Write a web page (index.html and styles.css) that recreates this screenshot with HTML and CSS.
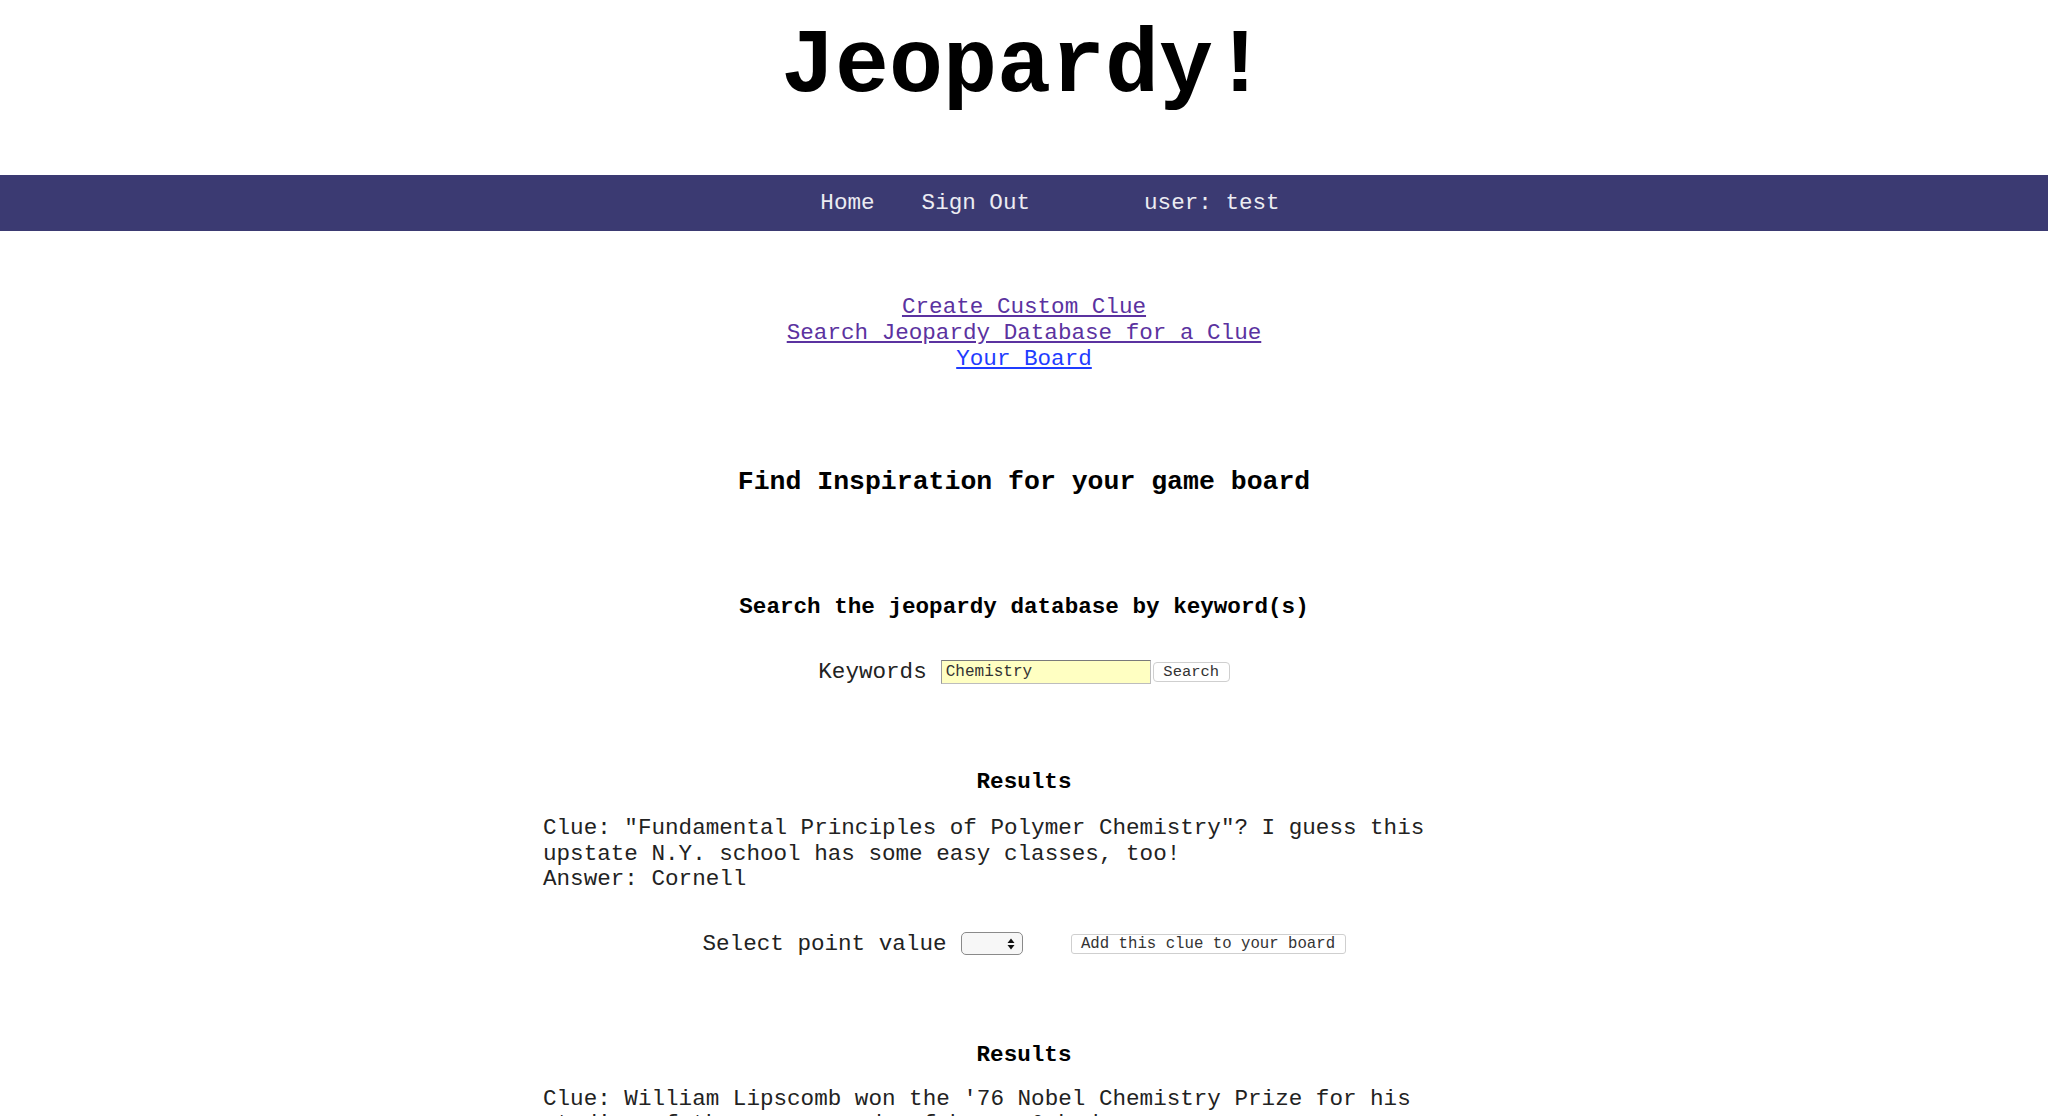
FILE: index.html
```html
<!DOCTYPE html>
<html lang="en">
<head>
<meta charset="utf-8">
<title>Jeopardy!</title>
<link rel="stylesheet" href="styles.css">
</head>
<body>
<header class="masthead">
  <h1 class="title">Jeopardy!</h1>
</header>
<nav class="navbar">
  <div class="nav-inner">
    <a class="nav-link" href="#">Home</a>
    <a class="nav-link nav-signout" href="#">Sign Out</a>
    <span class="nav-user">user: test</span>
  </div>
</nav>
<main class="content">
  <div class="links">
    <a class="visited" href="#">Create Custom Clue</a><br>
    <a class="visited" href="#">Search Jeopardy Database for a Clue</a><br>
    <a class="fresh" href="#">Your Board</a>
  </div>

  <h3 class="inspire">Find Inspiration for your game board</h3>

  <h4 class="search-head">Search the jeopardy database by keyword(s)</h4>

  <form class="search-row">
    <label class="kw-label">Keywords</label>
    <input class="kw-input" type="text" value="Chemistry">
    <button class="kw-btn" type="button">Search</button>
  </form>

  <section class="result">
    <h4 class="result-head">Results</h4>
    <p class="clue">Clue: "Fundamental Principles of Polymer Chemistry"? I guess this upstate N.Y. school has some easy classes, too!<br>Answer: Cornell</p>
    <div class="add-row">
      <span class="pv-label">Select point value</span>
      <span class="select">
        <svg class="select-arrows" width="8" height="12" viewBox="0 0 8 12"><path d="M4 0.5 L7.5 5 L0.5 5 Z M0.5 7 L7.5 7 L4 11.5 Z" fill="#111"/></svg>
      </span>
      <button class="add-btn" type="button">Add this clue to your board</button>
    </div>
  </section>

  <section class="result">
    <h4 class="result-head result-head-2">Results</h4>
    <p class="clue clue-2">Clue: William Lipscomb won the '76 Nobel Chemistry Prize for his studies of these compounds of boron &amp; hydrogen<br>Answer: boranes</p>
  </section>
</main>
</body>
</html>
```

FILE: styles.css
```css
html, body {
  margin: 0;
  padding: 0;
  background: #ffffff;
}

body {
  font-family: "Courier New", "Nimbus Mono PS", "Nimbus Mono L", "FreeMono", "Liberation Mono", monospace;
  font-size: 22.6px;
  color: #111;
}

.masthead {
  height: 175px;
  text-align: center;
}

.title {
  margin: 0;
  padding-top: 16px;
  font-size: 90px;
  font-weight: bold;
  line-height: normal;
  color: #000;
}

.navbar {
  height: 56px;
  background: #3b3a72;
  display: flex;
  justify-content: center;
  align-items: center;
}

.nav-inner {
  display: flex;
  align-items: center;
  padding-left: 52px;
}

.nav-link,
.nav-user {
  color: #ececf2;
  text-decoration: none;
  font-size: 22.6px;
}

.nav-signout {
  margin-left: 47px;
}

.nav-user {
  margin-left: 114px;
}

.content {
  text-align: center;
}

.links {
  margin-top: 63px;
  line-height: 26px;
}

.links a {
  text-decoration: underline;
}

.links .visited {
  color: #5b32a0;
}

.links .fresh {
  color: #1f3cff;
}

.inspire {
  margin: 95px 0 0;
  font-size: 26.5px;
  line-height: 30px;
  font-weight: bold;
  color: #000;
}

.search-head {
  margin: 97px 0 0;
  font-size: 22.6px;
  line-height: 26px;
  font-weight: bold;
  color: #000;
}

.search-row {
  margin: 39px 0 0;
  display: flex;
  justify-content: center;
  align-items: center;
  height: 26px;
}

.kw-label {
  color: #222;
  margin-right: 14px;
}

.kw-input {
  box-sizing: border-box;
  width: 210px;
  height: 24px;
  margin: 0;
  padding: 0 4px;
  font-family: "Courier New", "Nimbus Mono PS", "Nimbus Mono L", "FreeMono", "Liberation Mono", monospace;
  font-size: 16px;
  color: #333;
  background: #ffffc2;
  border: 1px solid #bdbdbd;
  border-top-color: #7a7a7a;
  border-left-color: #9a9a9a;
}

.kw-btn {
  box-sizing: border-box;
  width: 77px;
  height: 20px;
  margin: 0 0 0 2px;
  padding: 0;
  font-family: "Courier New", "Nimbus Mono PS", "Nimbus Mono L", "FreeMono", "Liberation Mono", monospace;
  font-size: 15.5px;
  color: #333;
  background: #fff;
  border: 1px solid #cfcfcf;
  border-radius: 4px;
}

.result {
  text-align: left;
}

.result-head {
  margin: 84px 0 0;
  text-align: center;
  font-size: 22.6px;
  line-height: 26px;
  font-weight: bold;
  color: #000;
}

.result-head-2 {
  margin-top: 85px;
}

.clue {
  width: 962px;
  margin: 21px auto 0;
  line-height: 25.6px;
  color: #222;
}

.clue-2 {
  margin-top: 19px;
}

.add-row {
  margin: 38px 0 0;
  display: flex;
  justify-content: center;
  align-items: center;
  height: 26px;
}

.pv-label {
  color: #222;
  margin-right: 14px;
}

.select {
  box-sizing: border-box;
  width: 62px;
  height: 23px;
  border: 1px solid #8a8a8a;
  border-radius: 5px;
  background: #f7f7f7;
  display: flex;
  justify-content: flex-end;
  align-items: center;
  padding-right: 7px;
}

.select-arrows {
  display: block;
}

.add-btn {
  box-sizing: border-box;
  width: 275px;
  height: 20px;
  margin: 0 0 0 48px;
  padding: 0;
  font-family: "Courier New", "Nimbus Mono PS", "Nimbus Mono L", "FreeMono", "Liberation Mono", monospace;
  font-size: 15.7px;
  color: #333;
  background: #fff;
  border: 1px solid #cfcfcf;
  border-radius: 3px;
}
```
